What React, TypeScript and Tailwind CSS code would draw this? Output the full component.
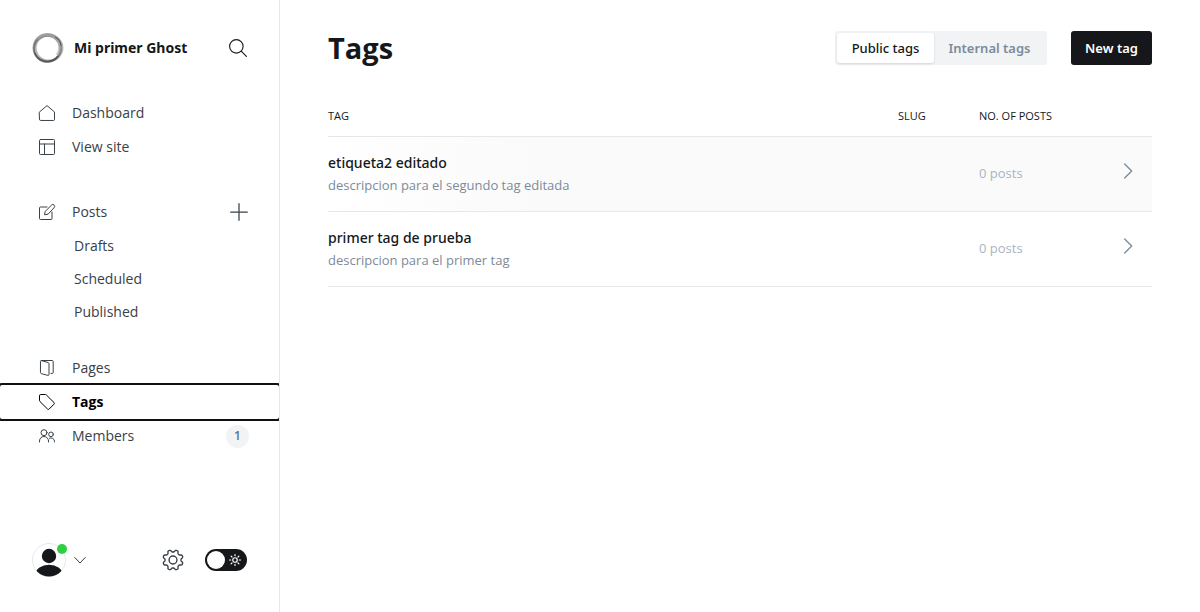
import React, { useState } from "react";

type IconProps = { className?: string; children: React.ReactNode };

function Icon({ className = "size-4", children }: IconProps) {
  return (
    <svg
      className={className}
      viewBox="0 0 24 24"
      fill="none"
      stroke="currentColor"
      strokeWidth="1.5"
      strokeLinecap="round"
      strokeLinejoin="round"
      overflow="visible"
      aria-hidden="true"
    >
      {children}
    </svg>
  );
}

const icons = {
  home: <path d="M.75 10.5 12 .9l11.25 9.6v11.2a1.5 1.5 0 0 1-1.5 1.5H2.25a1.5 1.5 0 0 1-1.5-1.5z" />,
  layout: (
    <>
      <rect x=".75" y=".75" width="22.5" height="22.5" rx="1.5" />
      <path d="M.75 7.5h22.5M8.25 7.5v15.75" />
    </>
  ),
  edit: (
    <>
      <path d="M12 4.5H2.25a1.5 1.5 0 0 0-1.5 1.5v15.75a1.5 1.5 0 0 0 1.5 1.5H18a1.5 1.5 0 0 0 1.5-1.5V12" />
      <path d="m13.2 15.3-4.9.9.8-4.9 9.9-9.8a2.4 2.4 0 0 1 3.5 0l.3.4a2.4 2.4 0 0 1 0 3.5z" />
    </>
  ),
  pages: (
    <path d="m3.4 .9 10.300 2.900a1.800 1.800 0 0 1 1.300 1.700v16.300c0 1-.7 1.500-1.600 1.300L3.500 20.500A1.800 1.800 0 0 1 2.200 18.800V2.250A1.500 1.500 0 0 1 3.700.75H19.800A1.500 1.500 0 0 1 21.300 2.250V18.700A1.500 1.500 0 0 1 19.800 20.200H18" />
  ),
  tag: (
    <path d="M.75 2.500A1.750 1.750 0 0 1 2.500.75h7a2 2 0 0 1 1.400.600L22.500 12.800a1.700 1.700 0 0 1 0 2.400L15.200 22.600a1.700 1.700 0 0 1-2.400 0L1.350 11.200a2 2 0 0 1-.600-1.400z" />
  ),
  members: (
    <>
      <circle cx="7.500" cy="7" r="4.500" />
      <path d="M.75 21v-1.500a6.750 6.750 0 0 1 13.500 0V21" />
      <circle cx="18" cy="9.500" r="3.500" />
      <path d="M15.600 15.300A5.300 5.300 0 0 1 23.250 20v1" />
    </>
  ),
};

// Eight rounded teeth, with a valley on each axis.
const gearPath =
  Array.from({ length: 160 }, (_, i) => {
    const angle = (i / 160) * Math.PI * 2;
    const r = 9.9 - 1.3 * Math.tanh(1.8 * Math.cos(8 * angle));
    const x = 12 + r * Math.cos(angle);
    const y = 12 + r * Math.sin(angle);
    return `${i === 0 ? "M" : "L"}${x.toFixed(2)} ${y.toFixed(2)}`;
  }).join("") + "Z";

function NavItem({ icon, label, active = false, children }: { icon: React.ReactNode; label: string; active?: boolean; children?: React.ReactNode }) {
  return (
    <li
      className={
        active
          ? "flex h-[34px] items-center rounded-xs font-bold text-black outline-2 outline-[#101114]"
          : "flex h-[34px] items-center text-[#394047]"
      }
    >
      <a href="#" className="flex h-full flex-1 items-center gap-[17px] pl-[39px]">
        <Icon className="size-4">{icon}</Icon>
        {label}
      </a>
      {children}
    </li>
  );
}

function Sidebar() {
  const [night, setNight] = useState(false);
  return (
    <aside className="flex w-[280px] shrink-0 flex-col overflow-hidden border-r border-[#e5e7ea] text-sm">
      <header className="flex h-24 items-center px-8">
        <svg className="size-8" viewBox="0 0 32 32" fill="none" aria-hidden="true">
          <circle cx="15.300" cy="16" r="13.800" stroke="#666" strokeOpacity=".7" strokeWidth="1.800" />
          <ellipse cx="16.800" cy="16" rx="13.400" ry="12.800" stroke="#777" strokeOpacity=".55" strokeWidth="2.400" />
          <ellipse cx="15" cy="17" rx="12.800" ry="13" stroke="#444" strokeOpacity=".5" strokeWidth="1.400" />
          <path d="M5 7C10 1.500 20 1.500 25 6M20 3c8 4 10 13 5 20" stroke="#aaa" strokeOpacity=".6" strokeWidth="2.800" />
          <path d="M3 21c4 9 16 11 23 3M23 5c4 2 6 6 6 9" stroke="#333" strokeOpacity=".55" strokeWidth="1.200" />
        </svg>
        <strong className="flex-1 pl-[10px] font-['Noto_Sans','Open_Sans',sans-serif] font-bold text-[#15171a]">Mi primer Ghost</strong>
        <button type="button" aria-label="Search" className="text-[#15171a]">
          <Icon className="size-[18px]">
            <circle cx="9.800" cy="9.800" r="9" />
            <path d="m16.300 16.300 6.900 6.900" />
          </Icon>
        </button>
      </header>

      <nav className="flex flex-col">
        <ul>
          <NavItem icon={icons.home} label="Dashboard" />
          <NavItem icon={icons.layout} label="View site" />
        </ul>
        <ul className="mt-[31px]">
          <NavItem icon={icons.edit} label="Posts">
            <button type="button" aria-label="New post" className="mr-[30px]">
              <Icon className="size-5">
                <path d="M12 2v20M2 12h20" />
              </Icon>
            </button>
          </NavItem>
          {["Drafts", "Scheduled", "Published"].map((label) => (
            <li key={label} className="h-[33px] text-[#394047]">
              <a href="#" className="flex h-full items-center pl-[74px]">{label}</a>
            </li>
          ))}
        </ul>
        <ul className="mt-[23px]">
          <NavItem icon={icons.pages} label="Pages" />
          <NavItem icon={icons.tag} label="Tags" active />
          <NavItem icon={icons.members} label="Members">
            <span className="mr-[30px] flex size-[23px] items-center justify-center rounded-full bg-[#f1f3f4] text-xs font-semibold text-[#5d7199]">1</span>
          </NavItem>
        </ul>
      </nav>

      <footer className="mt-auto flex h-[104px] items-center px-8">
        <button type="button" aria-label="Account menu" className="flex items-center gap-2 text-[#394047]">
          <span className="relative">
            <svg className="size-[34px]" viewBox="0 0 34 34" aria-hidden="true">
              <defs>
                <clipPath id="avatar"><circle cx="17" cy="17" r="16.500" /></clipPath>
              </defs>
              <circle cx="17" cy="17" r="16.500" fill="#fff" stroke="#e5e7ea" />
              <g clipPath="url(#avatar)" fill="#15171a">
                <circle cx="17" cy="13" r="7.200" />
                <ellipse cx="17" cy="31" rx="13.500" ry="9.300" />
              </g>
            </svg>
            <span className="absolute top-px -right-px size-[10px] rounded-full bg-[#30cf43]" />
          </span>
          <Icon className="size-3">
            <path strokeWidth="2" d="m1.500 7 10.500 11 10.500-11" />
          </Icon>
        </button>
        <a href="#" aria-label="Settings" className="ml-auto text-[#394047]">
          <Icon className="size-[22px]">
            <circle cx="12" cy="12" r="4.300" />
            <path d={gearPath} />
          </Icon>
        </a>
        <label className="relative ml-[21px] flex h-[22px] w-[42px] cursor-pointer items-center justify-between rounded-full bg-[#15171a] pr-[6px] pl-[2px] text-white">
          <input
            type="checkbox"
            className="sr-only"
            aria-label="Night shift"
            checked={night}
            onChange={(e) => setNight(e.target.checked)}
          />
          <span className="size-[18px] rounded-full bg-white" />
          <Icon className="size-3">
            <g strokeWidth="2.400">
              <circle cx="12" cy="12" r="4.500" />
              <path d="M12 1v2.500M12 20.500V23M1 12h2.500M20.500 12H23M4.200 4.200 6 6M18 18l1.800 1.800M4.200 19.800 6 18M18 6l1.800-1.800" />
            </g>
          </Icon>
        </label>
      </footer>
    </aside>
  );
}

const tags = [
  { name: "etiqueta2 editado", description: "descripcion para el segundo tag editada", posts: "0 posts", hovered: true },
  { name: "primer tag de prueba", description: "descripcion para el primer tag", posts: "0 posts", hovered: false },
];

export default function App() {
  const [tab, setTab] = useState("Public tags");
  return (
    <div className="flex min-h-screen bg-white font-['Open_Sans','Noto_Sans',sans-serif] text-[#15171a]">
      <Sidebar />
      <main className="min-w-0 flex-1 px-12">
        <header className="flex h-24 items-center">
          <h1 className="flex-1 text-[29px] font-bold">Tags</h1>
          <div className="flex h-[34px] rounded-[3px] bg-[#f1f3f4] p-[2px] font-['Noto_Sans','Open_Sans',sans-serif] text-[13px]">
            {["Public tags", "Internal tags"].map((label) => (
              <button
                key={label}
                type="button"
                onClick={() => setTab(label)}
                className={
                  tab === label
                    ? "w-[97px] rounded-[3px] bg-white pt-[2px] font-medium shadow-sm"
                    : "w-[111px] rounded-[3px] pt-[2px] font-semibold text-[#7c8b9a]"
                }
              >
                {label}
              </button>
            ))}
          </div>
          <button type="button" className="ml-6 h-[34px] w-[81px] rounded-[3px] bg-[#15171a] pt-[2px] font-['Noto_Sans','Open_Sans',sans-serif] text-[13px] font-semibold text-white">
            New tag
          </button>
        </header>

        <table className="w-full table-fixed border-collapse text-left">
          <thead>
            <tr className="h-10 border-b border-[#e5e7ea] text-[11px]">
              <th className="font-normal">TAG</th>
              <th className="w-[81px] font-normal">SLUG</th>
              <th className="w-[124px] font-normal">NO. OF POSTS</th>
              <td className="w-[49px]" />
            </tr>
          </thead>
          <tbody>
            {tags.map((t) => (
              <tr
                key={t.name}
                className={
                  t.hovered
                    ? "h-[75px] border-b border-[#e5e7ea] bg-linear-to-r from-white to-[#fafafa] to-25%"
                    : "h-[75px] border-b border-[#e5e7ea]"
                }
              >
                <td className="pb-[2px]">
                  <h3 className="font-['Noto_Sans','Open_Sans',sans-serif] text-sm leading-6 font-medium">{t.name}</h3>
                  <p className="text-[13px] leading-5 text-[#7c8b9a]">{t.description}</p>
                </td>
                <td />
                <td className="text-[13px] text-[#abb4be]">{t.posts}</td>
                <td className="pb-[6px]">
                  <a href="#" aria-label={t.name} className="flex justify-end pr-4 text-[#7c8b9a]">
                    <Icon className="size-4">
                      <path strokeWidth="2" d="m7 1.500 10.500 10.500L7 22.500" />
                    </Icon>
                  </a>
                </td>
              </tr>
            ))}
          </tbody>
        </table>
      </main>
    </div>
  );
}
